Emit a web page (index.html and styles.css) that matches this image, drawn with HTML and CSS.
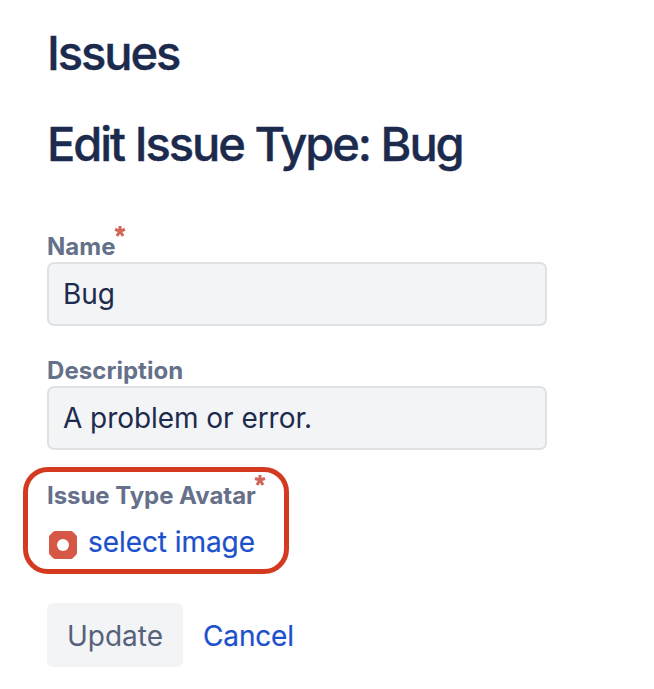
FILE: index.html
```html
<!DOCTYPE html>
<html lang="en">
<head>
<meta charset="utf-8">
<title>Edit Issue Type</title>
<link rel="stylesheet" href="styles.css">
</head>
<body>
<main>
  <h1 class="title">Issues</h1>
  <h2 class="title sub">Edit Issue Type: Bug</h2>
  <form>
    <div class="field">
      <label for="name">Name<svg class="req" viewBox="0 0 12 12"><path d="M6 6V1M6 6L1 4.500M6 6l5-1.500M6 6l-3 5M6 6l3 5"/></svg></label>
      <input id="name" type="text" value="Bug">
    </div>
    <div class="field">
      <label for="description">Description</label>
      <input id="description" type="text" value="A problem or error.">
    </div>
    <div class="avatar">
      <div class="label">Issue Type Avatar<svg class="req" viewBox="0 0 12 12"><path d="M6 6V1M6 6L1 4.500M6 6l5-1.500M6 6l-3 5M6 6l3 5"/></svg></div>
      <div class="pick">
        <svg class="bug" viewBox="0 0 28 28"><path d="M6 0h16q1 0 2 1l3 3q1 1 1 2v16q0 1-1 2l-3 3q-1 1-2 1H6q-1 0-2-1l-3-3q-1-1-1-2V6q0-1 1-2l3-3q1-1 2-1z" fill="#d65745"/><circle cx="14" cy="14" r="6" fill="#fff"/></svg>
        <a href="#">select image</a>
      </div>
    </div>
    <div class="actions">
      <button type="button">Update</button>
      <a class="cancel" href="#">Cancel</a>
    </div>
  </form>
</main>
</body>
</html>
```
FILE: styles.css
```css
* { box-sizing: border-box; }
body { margin: 0; background: #fff; color: #1c2b4d; font-family: Inter, sans-serif; }
main { padding: 24px 0 0 47px; }
.title { margin: 0; font-size: 47px; line-height: 58px; font-weight: 500; letter-spacing: -2.050px; word-spacing: 0.200px; white-space: nowrap; -webkit-text-stroke: 0.400px #1c2b4d; }
.sub { margin-top: 33px; }
form { padding: 59px 0 0; }
.field { width: 500px; height: 124px; }
label, .label { display: flex; align-items: center; height: 28px; margin-bottom: 2px; font-size: 24px; font-weight: 650; color: #65708a; white-space: nowrap; letter-spacing: 0.050px; }
.label { letter-spacing: -0.050px; }
.req { width: 12px; height: 12px; margin: 0 0 30px -2px; flex: none; fill: none; stroke: #d2665a; stroke-width: 3; }
input { display: block; width: 500px; height: 64px; margin: 0; padding: 0 14px; border: 2px solid #dfe1e5; border-radius: 7px; background: #f3f4f6; color: #1c2b4d; font: 400 28px Inter, sans-serif; letter-spacing: -0.050px; }
.avatar { width: 266px; height: 107px; margin: -13px 0 0 -24px; padding: 9px 0 0 19px; border: 5px solid #d33a20; border-radius: 25px; }
.pick { display: flex; align-items: center; height: 34px; margin-top: 16px; gap: 11px; }
.bug { width: 28px; height: 28px; margin: 5px 0 0 2px; }
a { color: #1d50cc; font-size: 28px; line-height: 34px; text-decoration: none; white-space: nowrap; letter-spacing: -0.070px; -webkit-text-stroke: 0.200px #1d50cc; }
.actions { display: flex; align-items: center; gap: 20px; margin-top: 29px; }
button { width: 136px; height: 64px; padding: 2px 0 0; border: 0; border-radius: 6px; background: #f3f4f6; color: #56617b; font: 400 28px Inter, sans-serif; }
.cancel { padding-top: 2px; letter-spacing: -0.150px; }
```
